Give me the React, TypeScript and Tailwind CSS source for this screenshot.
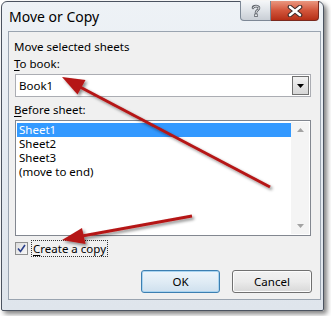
export default function App() {
  const font = { fontFamily: '"Noto Sans", "Open Sans", sans-serif' };
  return (
    <div className="w-[331px] h-[316px] bg-white overflow-hidden relative pt-[1px] pl-[1px]" style={font}>
      <div className="w-[323px] h-[310px] rounded-t-[6px] rounded-b-[2px] border border-[#4b5360] bg-gradient-to-b from-[#eef2f6] via-[#e4eaf1] to-[#dfe5ec] shadow-[3px_3px_5px_rgba(0,0,0,0.5)] flex flex-col">
        {/* Title bar */}
        <div className="h-[29px] flex items-start justify-between">
          <div className="pl-[7px] pt-[5px] text-[14px] leading-[19px] text-black">Move or Copy</div>
          <div className="flex -mt-[1px] mr-[4px]">
            <div className="w-[31px] h-[20px] rounded-bl-[4px] border border-[#7d8896] border-t-0 bg-gradient-to-b from-[#f4f6f8] via-[#dfe3e8] to-[#c9ced5] flex items-center justify-center">
              <svg width="10" height="13" viewBox="0 0 10 13">
                <path d="M2 4 C2 1.5 8 1.5 8 4 C8 6 5 6 5 8.5" fill="none" stroke="#5a5f66" strokeWidth="2.6" strokeLinecap="round" />
                <path d="M2 4 C2 1.5 8 1.5 8 4 C8 6 5 6 5 8.5" fill="none" stroke="#f3f4f6" strokeWidth="1" strokeLinecap="round" />
                <rect x="3.7" y="10" width="2.6" height="2.6" fill="#f3f4f6" stroke="#5a5f66" strokeWidth="0.8" />
              </svg>
            </div>
            <div className="w-[48px] h-[20px] rounded-br-[4px] border border-[#7a2a20] border-t-0 border-l-0 bg-gradient-to-b from-[#e9967f] via-[#d2553b] to-[#b52e16] flex items-center justify-center">
              <svg width="16" height="12" viewBox="0 0 16 12">
                <path d="M3 2 L13 10 M13 2 L3 10" stroke="#3d2a28" strokeWidth="4.6" strokeLinecap="round" />
                <path d="M3 2 L13 10 M13 2 L3 10" stroke="#ffffff" strokeWidth="2.6" strokeLinecap="round" />
              </svg>
            </div>
          </div>
        </div>
        {/* Client area */}
        <div className="ml-[6px] mr-[2px] h-[269px] border border-[#9aa4b0] bg-[#f0f0f0] flex flex-col px-[5px] text-[11.5px] leading-[16px] text-black">
          <div className="mt-[7px]">Move selected sheets</div>
          <div className="mt-[1px]"><span className="underline underline-offset-2">T</span>o book:</div>
          <div className="mt-[2px] ml-[1px] w-[296px] h-[23px] border border-[#abadb3] bg-white flex items-center justify-between">
            <span className="pl-[3px]">Book1</span>
            <div className="w-[17px] h-[19px] mr-[1px] border border-[#707070] bg-gradient-to-b from-[#f2f2f2] to-[#d6d6d6] flex items-center justify-center">
              <svg width="7" height="4" viewBox="0 0 7 4"><path d="M0 0 L7 0 L3.5 4 Z" fill="#000" /></svg>
            </div>
          </div>
          <div className="mt-[5px]"><span className="underline underline-offset-2">B</span>efore sheet:</div>
          <div className="mt-[2px] ml-[1px] w-[296px] h-[116px] border border-[#828790] bg-white flex p-[1px]">
            <div className="flex-1 flex flex-col pt-[1px]">
              <div className="bg-[#3399ff] text-white pl-[2px] h-[14px] leading-[14px]">Sheet1</div>
              <div className="pl-[2px] h-[14px] leading-[14px]">Sheet2</div>
              <div className="pl-[2px] h-[14px] leading-[14px]">Sheet3</div>
              <div className="pl-[2px] h-[14px] leading-[14px]">(move to end)</div>
            </div>
            <div className="w-[18px] bg-[#f4f4f4] flex flex-col justify-between items-center py-[6px]">
              <svg width="7" height="4" viewBox="0 0 7 4"><path d="M0 4 L7 4 L3.5 0 Z" fill="#a3a3a3" /></svg>
              <svg width="7" height="4" viewBox="0 0 7 4"><path d="M0 0 L7 0 L3.5 4 Z" fill="#a3a3a3" /></svg>
            </div>
          </div>
          <div className="mt-[4px] ml-[1px] flex items-center">
            <div className="w-[13px] h-[13px] border border-[#8e8f8f] bg-gradient-to-br from-[#dcdcdc] to-[#f8f8f8] flex items-center justify-center">
              <svg width="9" height="9" viewBox="0 0 9 9"><path d="M1 4.5 L3.5 7.5 L8 1" fill="none" stroke="#2a3f8a" strokeWidth="1.6" /></svg>
            </div>
            <div className="ml-[3px] px-[1px] h-[17px] border border-dotted border-[#333] flex items-center">
              <span><span className="underline underline-offset-2">C</span>reate a copy</span>
            </div>
          </div>
          <div className="mt-[13px] flex justify-end gap-[12px] pr-[3px]">
            <div className="w-[79px] h-[23px] rounded-[3px] border border-[#3c7fb1] bg-gradient-to-b from-[#edf5fb] via-[#e0ecf5] to-[#cfe0ee] flex items-center justify-center shadow-[inset_0_0_0_1px_#a9d4f0]">OK</div>
            <div className="w-[80px] h-[23px] rounded-[3px] border border-[#707070] bg-gradient-to-b from-[#f2f2f2] via-[#ebebeb] to-[#d8d8d8] flex items-center justify-center shadow-[inset_0_0_0_1px_#fcfcfc]">Cancel</div>
          </div>
        </div>
      </div>
      {/* Annotation arrows */}
      <svg className="absolute left-0 top-0 pointer-events-none" width="331" height="316" viewBox="0 0 331 316">
        <defs>
          <filter id="sh" x="-20%" y="-20%" width="140%" height="140%">
            <feDropShadow dx="2" dy="2" stdDeviation="1.5" floodColor="#000" floodOpacity="0.45" />
          </filter>
        </defs>
        <g filter="url(#sh)" fill="#b51515" stroke="#b51515">
          <line x1="270" y1="187" x2="80" y2="87" strokeWidth="3" />
          <polygon points="62,77 85.5,80 77.5,94.5" stroke="none" />
          <line x1="192" y1="216" x2="82" y2="236" strokeWidth="3" />
          <polygon points="62,240 85.5,244 82,228" stroke="none" />
        </g>
      </svg>
    </div>
  );
}
